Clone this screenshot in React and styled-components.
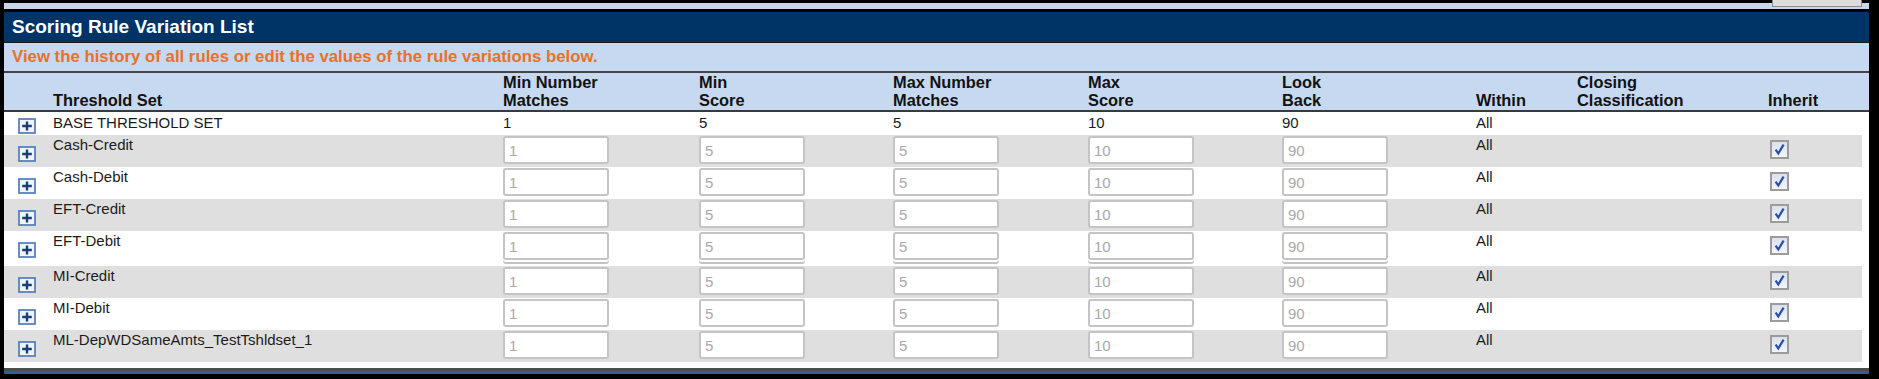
import styled, { createGlobalStyle } from 'styled-components';

const GlobalStyle = createGlobalStyle`
  html, body {
    margin: 0;
    padding: 0;
    background: #000;
  }
  body {
    font-family: "Liberation Sans", Arial, sans-serif;
  }
`;

// icon, threshold set, five values, within, closing classification
const COLUMNS = '49px 450px 196px 194px 195px 194px 194px 101px 191px';

const Page = styled.div`
  position: relative;
  display: flex;
  flex-direction: column;
  width: 1879px;
  height: 379px;
  padding: 0 10px 5px 4px;
  box-sizing: border-box;
  background: #000;
`;

const TopStrip = styled.div`
  height: 6px;
  margin: 3px 0;
  background: #c9d6e7;
`;

const CutButton = styled.div`
  position: absolute;
  top: 0;
  left: 1772px;
  width: 90px;
  height: 7px;
  box-sizing: border-box;
  background: #dcdcdc;
  border: 1px solid #8d8d8d;
  border-top: none;
`;

const Panel = styled.div`
  display: flex;
  flex-direction: column;
  background: #fff;
`;

const TitleBar = styled.div`
  height: 30px;
  padding-left: 8px;
  background: #003366;
  border-bottom: 1px solid #1b1b1b;
  color: #fff;
  font-size: 19px;
  font-weight: bold;
  line-height: 30px;
`;

const MessageBar = styled.div`
  height: 28px;
  padding-left: 8px;
  background: #c6d9f0;
  border-bottom: 2px solid #454545;
  color: #e5722b;
  font-size: 16.8px;
  font-weight: bold;
  line-height: 28px;
`;

const HeaderRow = styled.div`
  display: grid;
  grid-template-columns: ${COLUMNS} 1fr;
  align-items: end;
  height: 37px;
  background: #c6d9f0;
  border-bottom: 2px solid #3a3a3a;
`;

const HeaderCell = styled.div`
  padding-bottom: 1px;
  color: #121212;
  font-size: 16.4px;
  font-weight: bold;
  line-height: 18px;
`;

const Body = styled.div`
  display: flex;
  flex-direction: column;
  padding: 0 7px 6px 0;
  background: #fff;
`;

const Row = styled.div`
  display: grid;
  grid-template-columns: ${COLUMNS} 94px;
  align-items: start;
  height: ${(p) => p.$height}px;
  background: ${(p) => (p.$shade ? '#dfdfdf' : '#fff')};
`;

const IconCell = styled.div`
  padding: ${(p) => p.$top}px 0 0 14px;
  line-height: 0;
`;

const Cell = styled.div`
  padding-top: ${(p) => p.$top}px;
  color: #1b1b1b;
  font-size: 15px;
  line-height: 17px;
`;

const FieldCell = styled.div`
  padding-top: 1px;
`;

const Field = styled.input`
  display: block;
  width: 106px;
  height: 28px;
  margin: 0;
  padding: 0 0 0 4px;
  box-sizing: border-box;
  background: #fff;
  border: 2px solid #c4c4c4;
  border-radius: 3px;
  color: #a9a9a9;
  font-family: "Liberation Sans", Arial, sans-serif;
  font-size: 15px;
  outline: none;
  box-shadow: ${(p) => (p.$doubled ? '0 2px 0 0 #fff, 0 4px 0 0 #c4c4c4' : 'none')};
`;

const CheckCell = styled.div`
  padding: 5px 0 0 2px;
  line-height: 0;
`;

const CheckBox = styled.span`
  display: inline-block;
  width: 19px;
  height: 19px;
  box-sizing: border-box;
  border: 2px solid #9c9c9c;
  background: linear-gradient(#d9e1ec, #f3f5f9);
`;

const BottomEdge = styled.div`
  height: 3px;
  background: #4d4d4d;
  border-bottom: 3px solid #2f5e9c;
`;

function PlusIcon() {
  return (
    <svg width="18" height="16" viewBox="0 0 18 16">
      <rect x="1" y="1" width="16" height="14" fill="#f1f4f9" stroke="#4f7bbb" strokeWidth="1.7" />
      <path d="M4.2 8h9.6M9 3.6v8.8" stroke="#1d3d78" strokeWidth="2.4" />
    </svg>
  );
}

function Check() {
  return (
    <CheckBox>
      <svg width="15" height="15" viewBox="0 0 15 15">
        <path d="M3.6 7.6l2.7 3.9L11.6 2.6" fill="none" stroke="#2b4fa6" strokeWidth="2.2" />
      </svg>
    </CheckBox>
  );
}

const values = ['1', '5', '5', '10', '90'];

const variations = [
  { name: 'Cash-Credit', shade: true },
  { name: 'Cash-Debit' },
  { name: 'EFT-Credit', shade: true },
  { name: 'EFT-Debit', doubled: true, height: 35 },
  { name: 'MI-Credit', shade: true },
  { name: 'MI-Debit' },
  { name: 'ML-DepWDSameAmts_TestTshldset_1', shade: true },
];

export default function App() {
  return (
    <>
      <GlobalStyle />
      <Page>
        <CutButton />
        <TopStrip />
        <Panel>
          <TitleBar>Scoring Rule Variation List</TitleBar>
          <MessageBar>View the history of all rules or edit the values of the rule variations below.</MessageBar>
          <HeaderRow>
            <HeaderCell />
            <HeaderCell>Threshold Set</HeaderCell>
            <HeaderCell>Min Number<br />Matches</HeaderCell>
            <HeaderCell>Min<br />Score</HeaderCell>
            <HeaderCell>Max Number<br />Matches</HeaderCell>
            <HeaderCell>Max<br />Score</HeaderCell>
            <HeaderCell>Look<br />Back</HeaderCell>
            <HeaderCell>Within</HeaderCell>
            <HeaderCell>Closing<br />Classification</HeaderCell>
            <HeaderCell>Inherit</HeaderCell>
          </HeaderRow>
          <Body>
            <Row $height={23}>
              <IconCell $top={6}><PlusIcon /></IconCell>
              <Cell $top={2}>BASE THRESHOLD SET</Cell>
              {values.map((v, i) => (
                <Cell key={i} $top={2}>{v}</Cell>
              ))}
              <Cell $top={2}>All</Cell>
              <Cell />
              <Cell />
            </Row>
            {variations.map((row) => (
              <Row key={row.name} $height={row.height || 32} $shade={row.shade}>
                <IconCell $top={11}><PlusIcon /></IconCell>
                <Cell $top={1}>{row.name}</Cell>
                {values.map((v, i) => (
                  <FieldCell key={i}>
                    <Field readOnly defaultValue={v} $doubled={row.doubled} />
                  </FieldCell>
                ))}
                <Cell $top={1}>All</Cell>
                <Cell />
                <CheckCell><Check /></CheckCell>
              </Row>
            ))}
          </Body>
          <BottomEdge />
        </Panel>
      </Page>
    </>
  );
}
